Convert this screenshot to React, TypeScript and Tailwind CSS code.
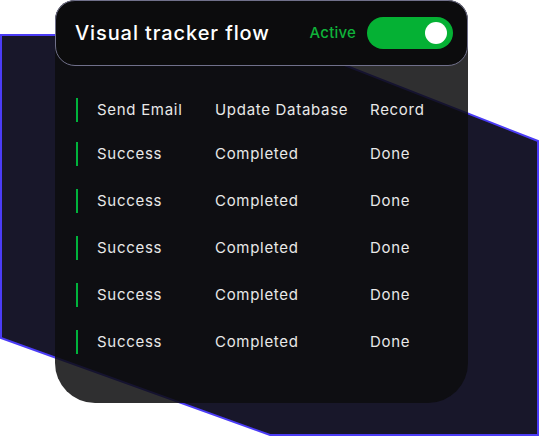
import { useState } from "react"

const rows = [
  { a: "Success", b: "Completed", c: "Done" },
  { a: "Success", b: "Completed", c: "Done" },
  { a: "Success", b: "Completed", c: "Done" },
  { a: "Success", b: "Completed", c: "Done" },
  { a: "Success", b: "Completed", c: "Done" },
]

function Row({ a, b, c }: { a: string; b: string; c: string }) {
  return (
    <div className="flex h-6 items-center">
      <div className="h-6 w-[2px] bg-[#00b33c]" />
      <span className="ml-[19px] w-[118px]">{a}</span>
      <span className="w-[155px]">{b}</span>
      <span>{c}</span>
    </div>
  )
}

export default function App() {
  const [active, setActive] = useState(true)

  return (
    <div
      className="relative h-[436px] w-[539px] overflow-hidden bg-white"
      style={{ fontFamily: "Inter, 'Noto Sans', sans-serif" }}
    >
      {/* backdrop shape */}
      <svg className="absolute inset-0" width="539" height="436" viewBox="0 0 539 436">
        <polygon
          points="1,35 268,35 538,141 538,435 270,435 1,338"
          fill="#18172a"
          stroke="#4b3cf6"
          strokeWidth="2"
        />
      </svg>

      {/* card */}
      <div className="relative ml-[55px] flex h-[403px] w-[413px] flex-col rounded-t-[20px] rounded-b-[40px] bg-[rgba(13,13,14,0.86)]">
        <div className="flex h-[66px] items-center justify-between rounded-[20px] border border-[#70708a] bg-[#0c0c0d] pl-[19px] pr-[14px]">
          <h1 className="text-[20px] font-medium tracking-[0.9px] text-white">Visual tracker flow</h1>
          <div className="flex items-center gap-[11px]">
            <span className="text-[15px] font-medium tracking-[0.2px] text-[#0fb33a]">Active</span>
            <button
              onClick={() => setActive(!active)}
              className="flex h-8 w-[86px] items-center justify-end rounded-full bg-[#05b134] pr-[6px]"
            >
              <span className="h-[22px] w-[22px] rounded-full bg-white" />
            </button>
          </div>
        </div>

        <div className="flex flex-col pl-[21px] pt-[32px] text-[15px] tracking-[0.7px] text-[#e8e8e8]">
          <div className="mb-[20px]">
            <Row a="Send Email" b="Update Database" c="Record" />
          </div>
          <div className="flex flex-col gap-[23px]">
            {rows.map((r, i) => (
              <Row key={i} {...r} />
            ))}
          </div>
        </div>
      </div>
    </div>
  )
}
